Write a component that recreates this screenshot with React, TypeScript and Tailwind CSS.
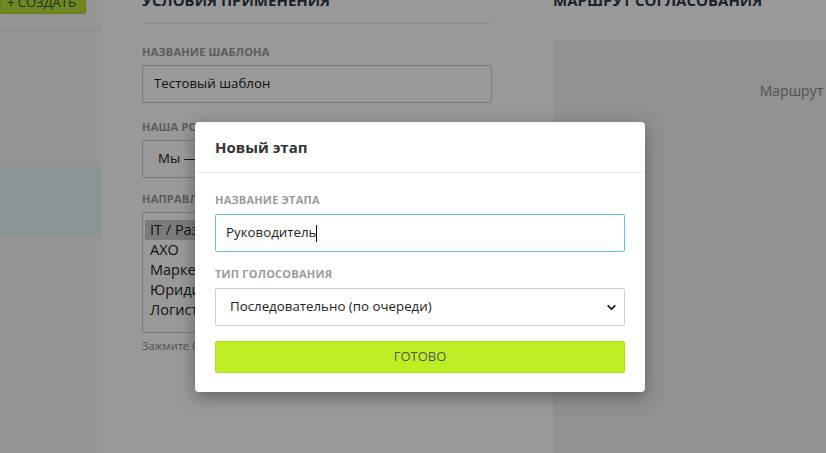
import { ChevronDown } from "lucide-react";

const font = { fontFamily: '"Open Sans", "Liberation Sans", sans-serif' };

const directions = ["IT / Разработка", "АХО", "Маркетинг", "Юридический", "Логистика"];

const Sidebar = () => (
  <aside className="w-[102px] shrink-0 bg-[#f9f9f9] h-[475px]">
    <div className="h-[36px] flex items-end">
      <button className="w-[86px] h-[26px] bg-[#b7e43a] text-[#3b4a1d] text-[13px] rounded-r-[2px] leading-[26px] text-left pl-[6px] border border-[#a5cf2f]">
        + СОЗДАТЬ
      </button>
    </div>
    <div className="mt-[16px] border-b border-[#e6e6e6]" />
    <div className="mt-[136px] h-[68px] bg-[#e6f5f8]" />
  </aside>
);

const Label = ({ children }: { children: React.ReactNode }) => (
  <p className="text-[11px] font-bold uppercase tracking-[0.02em] text-[#9a9a9a] leading-[14px]">{children}</p>
);

const Conditions = () => (
  <section className="w-[350px] shrink-0">
    <h2 className="text-[15px] font-bold uppercase text-[#2f3a4a] leading-[20px] pt-[12px] pb-[13px] border-b border-[#eaeaea]">
      Условия применения
    </h2>
    <div className="mt-[21px]">
      <Label>Название шаблона</Label>
      <div className="mt-[6px] h-[38px] border border-[#cfcfcf] rounded-[2px] bg-white px-[11px] flex items-center text-[13.3px] text-[#222]">
        Тестовый шаблон
      </div>
    </div>
    <div className="mt-[17px]">
      <Label>Наша роль</Label>
      <div className="mt-[6px] h-[38px] border border-[#cfcfcf] rounded-[2px] bg-white px-[15px] flex items-center text-[13.3px] text-[#222]">
        Мы — заказчик
      </div>
    </div>
    <div className="mt-[14px]">
      <Label>Направление</Label>
      <div className="mt-[6px] h-[121px] border border-[#cfcfcf] rounded-[2px] bg-white px-[2px] pt-[7px] text-[14.5px] text-[#222] leading-[20px]">
        {directions.map((d, i) => (
          <div key={d} className={`px-[5px] ${i === 0 ? "bg-[#cecece]" : ""}`}>
            {d}
          </div>
        ))}
      </div>
      <p className="mt-[5px] text-[11px] text-[#8a8a8a]">Зажмите Ctrl, чтобы выбрать несколько</p>
    </div>
  </section>
);

const Route = () => (
  <section className="w-[576px] shrink-0">
    <h2 className="text-[15px] font-bold uppercase text-[#2f3a4a] leading-[20px] pt-[12px] pb-[30px]">
      Маршрут согласования
    </h2>
    <div className="h-[440px] bg-[#f1f3f4] text-center pt-[40px] text-[14px] text-[#8a8a8a]">
      Маршрут пока не задан
    </div>
  </section>
);

const Modal = () => (
  <div className="absolute left-[195px] top-[122px] w-[450px] bg-white rounded-[4px] shadow-[0_5px_18px_rgba(0,0,0,0.35)]">
    <div className="h-[51px] px-[20px] flex items-center border-b border-[#ececec]">
      <h3 className="text-[15px] font-bold text-[#333]">Новый этап</h3>
    </div>
    <div className="px-[20px] pt-[20px] pb-[19px]">
      <Label>Название этапа</Label>
      <div className="mt-[7px] h-[38px] border border-[#62c2dc] rounded-[2px] px-[10px] flex items-center text-[13.3px] text-[#222]">
        Руководитель<span className="w-px h-[17px] bg-black" />
      </div>
      <div className="mt-[15px]">
        <Label>Тип голосования</Label>
      </div>
      <div className="mt-[7px] h-[38px] border border-[#cfcfcf] rounded-[2px] pl-[14px] pr-[6px] flex items-center justify-between text-[13.3px] text-[#222]">
        <span>Последовательно (по очереди)</span>
        <ChevronDown size={13} strokeWidth={3.5} className="text-[#222]" />
      </div>
      <button className="mt-[15px] w-full h-[32px] bg-[#bdee24] border border-[#b0dd1e] rounded-[2px] text-[13px] text-[#555] uppercase">
        Готово
      </button>
    </div>
  </div>
);

export default function App() {
  return (
    <div className="relative w-[826px] h-[453px] overflow-hidden bg-white" style={font}>
      <div className="flex -mt-[22px]">
        <Sidebar />
        <div className="flex gap-[61px] pl-[40px]">
          <Conditions />
          <Route />
        </div>
      </div>
      <div className="absolute inset-0 bg-black/40" />
      <Modal />
    </div>
  );
}
